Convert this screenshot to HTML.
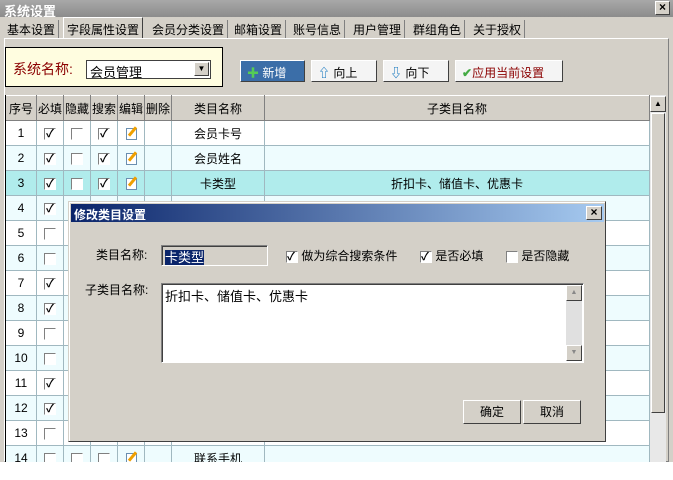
<!DOCTYPE html>
<html><head><meta charset="utf-8"><style>
*{box-sizing:border-box;margin:0;padding:0}
body{width:673px;height:480px;background:#fff;font-family:"Liberation Sans","Noto Sans CJK SC",sans-serif;font-size:12px;position:relative;overflow:hidden;color:#000}
.a{position:absolute}
.title{left:0;top:0;width:673px;height:17px;background:linear-gradient(#a8a8a8,#8c8c8c);color:#fff;font-weight:bold;font-size:13px;padding:1px 4px}
.xb{width:15px;height:14px;background:#d4d0c8;border:1px solid;border-color:#fff #404040 #404040 #fff;font-size:12px;line-height:11px;text-align:center;font-weight:bold;color:#000}
.bg{left:0;top:17px;width:673px;height:445px;background:#d4d0c8}
.tab{top:20px;height:18px;font-size:12px;padding:1px 3px;border-right:1px solid #808080}
.tab.sel{top:17px;height:22px;background:#d4d0c8;border:1px solid;border-color:#fff #404040 #d4d0c8 #fff}
.box{left:5px;top:47px;width:218px;height:40px;background:#fffde0;border:1px solid #000}
.btn{top:60px;height:22px;background:#f4f4f4;border:1px solid;border-color:#fff #404040 #404040 #fff;font-size:12px;padding:3px 6px}
table{border-collapse:collapse;position:absolute;left:5px;top:95px;table-layout:fixed}
td{height:25px;border:1px solid #a0b8c0;text-align:center;font-size:12px;padding:0}
tr.h td{background:#d4d0c8;border-color:#fff #808080 #808080 #fff}
tr.w td{background:#fff} tr.c td{background:#eefcfe} tr.s td{background:#b0ecec}
.cb{display:inline-block;width:12px;height:12px;border:1px solid;border-color:#808080 #fff #fff #808080;background:#fff;vertical-align:middle;font-size:11px;line-height:10px;font-weight:bold}
.ed{display:inline-block;width:11px;height:12px;border:1px solid #6b8fb0;background:#fff;position:relative;vertical-align:middle}
.ed:after{content:"";position:absolute;left:4px;top:-3px;width:3px;height:11px;background:#f0a000;transform:rotate(40deg)}
.dlg{left:68px;top:201px;width:538px;height:241px;background:#d4d0c8;border:1px solid;border-color:#d4d0c8 #404040 #404040 #d4d0c8;box-shadow:inset 1px 1px #fff}
.dt{left:2px;top:2px;width:533px;height:18px;background:linear-gradient(90deg,#0a246a,#a6caf0);color:#fff;font-weight:bold;font-size:12px;padding:2px 3px}
.sunk{border:1px solid;border-color:#808080 #fff #fff #808080;box-shadow:inset 1px 1px #404040}
.db{width:58px;height:24px;border:1px solid;border-color:#fff #404040 #404040 #fff;text-align:center;line-height:22px}
</style></head><body>
<div class="a title">系统设置</div>
<div class="a xb" style="left:655px;top:1px">×</div>
<div class="a bg"></div>
<div class="a tab" style="left:4px">基本设置</div>
<div class="a tab sel" style="left:63px;padding-top:3px">字段属性设置</div>
<div class="a tab" style="left:149px">会员分类设置</div>
<div class="a tab" style="left:231px">邮箱设置</div>
<div class="a tab" style="left:290px">账号信息</div>
<div class="a tab" style="left:350px">用户管理</div>
<div class="a tab" style="left:410px">群组角色</div>
<div class="a tab" style="left:470px">关于授权</div>
<div class="a" style="left:4px;top:38px;width:665px;height:424px;border:1px solid;border-color:#fff #808080 #808080 #fff"></div>
<div class="a box"><span class="a" style="left:7px;top:11px;font-size:14px;color:#8b0000">系统名称:</span>
<div class="a" style="left:80px;top:12px;width:125px;height:19px;background:#fff;border:1px solid #404040;padding:1px 3px;font-size:13px">会员管理<div class="a xb" style="right:1px;top:1px;font-size:8px;line-height:12px">▼</div></div></div>
<div class="a btn" style="left:240px;width:65px;background:#3b6ea8;color:#fff"><b style="color:#5c5">✚</b> 新增</div>
<div class="a btn" style="left:311px;width:66px"><b style="color:#1a7ac0">⇧</b> 向上</div>
<div class="a btn" style="left:383px;width:66px"><b style="color:#1a7ac0">⇩</b> 向下</div>
<div class="a btn" style="left:455px;width:108px;color:#8b0000"><b style="color:#4a4">✔</b>应用当前设置</div>
<table>
<colgroup><col style="width:31px"><col style="width:27px"><col style="width:27px"><col style="width:27px"><col style="width:27px"><col style="width:27px"><col style="width:93px"><col style="width:385px"></colgroup>
<tr class="h"><td>序号</td><td>必填</td><td>隐藏</td><td>搜索</td><td>编辑</td><td>删除</td><td>类目名称</td><td>子类目名称</td></tr>
<tr class="w"><td>1</td><td><span class="cb">✓</span></td><td><span class="cb"></span></td><td><span class="cb">✓</span></td><td><span class="ed"></span></td><td></td><td>会员卡号</td><td></td></tr>
<tr class="c"><td>2</td><td><span class="cb">✓</span></td><td><span class="cb"></span></td><td><span class="cb">✓</span></td><td><span class="ed"></span></td><td></td><td>会员姓名</td><td></td></tr>
<tr class="s"><td>3</td><td><span class="cb">✓</span></td><td><span class="cb"></span></td><td><span class="cb">✓</span></td><td><span class="ed"></span></td><td></td><td>卡类型</td><td>折扣卡、储值卡、优惠卡</td></tr>
<tr class="c"><td>4</td><td><span class="cb">✓</span></td><td></td><td></td><td></td><td></td><td></td><td></td></tr>
<tr class="w"><td>5</td><td><span class="cb"></span></td><td></td><td></td><td></td><td></td><td></td><td></td></tr>
<tr class="c"><td>6</td><td><span class="cb"></span></td><td></td><td></td><td></td><td></td><td></td><td></td></tr>
<tr class="w"><td>7</td><td><span class="cb">✓</span></td><td></td><td></td><td></td><td></td><td></td><td></td></tr>
<tr class="c"><td>8</td><td><span class="cb">✓</span></td><td></td><td></td><td></td><td></td><td></td><td></td></tr>
<tr class="w"><td>9</td><td><span class="cb"></span></td><td></td><td></td><td></td><td></td><td></td><td></td></tr>
<tr class="c"><td>10</td><td><span class="cb"></span></td><td></td><td></td><td></td><td></td><td></td><td></td></tr>
<tr class="w"><td>11</td><td><span class="cb">✓</span></td><td></td><td></td><td></td><td></td><td></td><td></td></tr>
<tr class="c"><td>12</td><td><span class="cb">✓</span></td><td></td><td></td><td></td><td></td><td></td><td></td></tr>
<tr class="w"><td>13</td><td><span class="cb"></span></td><td></td><td></td><td></td><td></td><td></td><td></td></tr>
<tr class="c"><td>14</td><td><span class="cb"></span></td><td><span class="cb"></span></td><td><span class="cb"></span></td><td><span class="ed"></span></td><td></td><td>联系手机</td><td></td></tr>
</table>
<div class="a" style="left:0;top:462px;width:673px;height:18px;background:#fff"></div>
<div class="a" style="left:5px;top:95px;width:1px;height:367px;background:#000"></div>
<div class="a" style="left:650px;top:95px;width:16px;height:367px;background:#e8e8e8"></div>
<div class="a xb" style="left:650px;top:96px;width:16px;height:16px;font-size:8px;line-height:13px">▲</div>
<div class="a" style="left:651px;top:113px;width:14px;height:300px;background:#d4d0c8;border:1px solid;border-color:#fff #404040 #404040 #fff"></div>
<div class="a dlg">
<div class="a dt">修改类目设置</div>
<div class="a xb" style="left:517px;top:4px;width:16px">×</div>
<span class="a" style="left:27px;top:44px">类目名称:</span>
<div class="a sunk" style="left:92px;top:43px;width:107px;height:21px;background:#d4d0c8;padding:1px 3px"><span style="background:#0a246a;color:#fff;font-size:13px">卡类型</span></div>
<span class="a" style="left:217px;top:45px"><span class="cb">✓</span> 做为综合搜索条件</span>
<span class="a" style="left:351px;top:45px"><span class="cb">✓</span> 是否必填</span>
<span class="a" style="left:437px;top:45px"><span class="cb"></span> 是否隐藏</span>
<span class="a" style="left:16px;top:79px">子类目名称:</span>
<div class="a sunk" style="left:92px;top:81px;width:423px;height:80px;background:#fff;padding:2px 3px;font-size:13px">折扣卡、储值卡、优惠卡
<div class="a" style="right:1px;top:1px;width:16px;height:76px;background:#e0e0e0"></div>
<div class="a xb" style="right:1px;top:1px;width:16px;height:16px;font-size:7px;line-height:13px;color:#888">▲</div>
<div class="a xb" style="right:1px;bottom:1px;width:16px;height:16px;font-size:7px;line-height:13px;color:#888">▼</div></div>
<div class="a db" style="left:394px;top:198px">确定</div>
<div class="a db" style="left:454px;top:198px">取消</div>
</div>
</body></html>
